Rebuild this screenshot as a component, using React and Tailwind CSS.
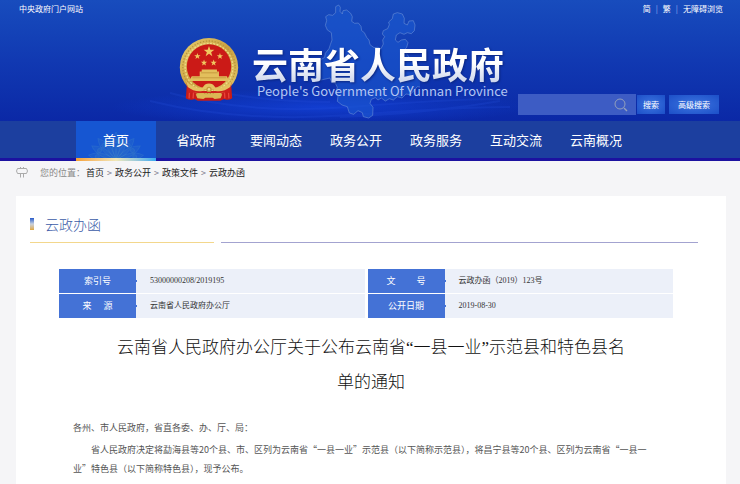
import { useState } from "react";

const navItems = ["首页", "省政府", "要闻动态", "政务公开", "政务服务", "互动交流", "云南概况"];
const crumbs = ["首页", "政务公开", "政策文件", "云政办函"];
const petals = [-80, -60, -40, -20, 0, 20, 40, 60, 80];

const rows = [
  [
    { label: ["索引号"], value: "53000000208/2019195" },
    { label: ["文", "号"], gap: "gap-[21px]", value: "云政办函（2019）123号" },
  ],
  [
    { label: ["来", "源"], gap: "gap-3", value: "云南省人民政府办公厅" },
    { label: ["公开日期"], value: "2019-08-30" },
  ],
];

function Star({ x, y, r }) {
  return (
    <path
      transform={`translate(${x} ${y}) scale(${r})`}
      fill="#f0c860"
      d="M0-1 .24-.32.95-.31.38.12.59.81 0 .4-.59.81-.38.12-.95-.31-.24-.32Z"
    />
  );
}

function Emblem() {
  return (
    <svg viewBox="0 0 180 190" className="h-[63px] w-[60px] shrink-0" aria-hidden="true">
      <defs>
        <linearGradient id="gold" x1="0" y1="0" x2="1" y2="1">
          <stop offset="0" stopColor="#e8d070" />
          <stop offset="0.5" stopColor="#caa040" />
          <stop offset="1" stopColor="#e6cc6c" />
        </linearGradient>
      </defs>
      <path d="M24 130 20 182q12 8 26 2l10 5h68l12-5q12 6 24-2l-4-52Z" fill="#c81c18" />
      <path d="M32 150l-2 32M44 156l-2 26M148 150l2 32M136 156l2 26" stroke="#e8453a" strokeWidth="4" />
      <circle cx="90" cy="88" r="88" fill="url(#gold)" />
      <circle cx="90" cy="88" r="79" fill="none" stroke="#b8963c" strokeWidth="4" strokeDasharray="4 5" />
      <circle cx="90" cy="88" r="72" fill="none" stroke="#efdc88" strokeWidth="4" strokeDasharray="6 4" />
      <circle cx="90" cy="86" r="67" fill="#cb1a17" />
      <Star x={90} y={41} r={17} />
      <Star x={55} y={55} r={10} />
      <Star x={123} y={55} r={10} />
      <Star x={75} y={75} r={10} />
      <Star x={104} y={75} r={10} />
      <path d="M68 95h46v6h6v14h24l6 15H30l8-15h24v-14h6Z" fill="#e3bf5c" />
      <path d="M66 105h50M40 120h102" stroke="#b98a30" strokeWidth="2" />
      <path d="M22 132q14 24 42 28l52 0q28-4 42-28l-4 34q-14-4-32 0H58q-18-4-32 0Z" fill="#cf211c" />
      <path d="M20 128q20 24 50 22l8-10q12-6 24 0l8 10q30 2 50-22l-6 20q-20 16-44 12l-6-6H76l-6 6q-24 4-44-12Z" fill="#e3c260" />
      <path d="M50 170l22-3 8 5h20l8-5 22 3-5 12-18 2-6-4H79l-6 4-18-2Z" fill="#dcb754" />
      <circle cx="90" cy="155" r="8" fill="#c59c3c" />
      <circle cx="90" cy="155" r="4" fill="#eed98a" />
    </svg>
  );
}

function ProvinceMap() {
  return (
    <svg viewBox="0 0 330 366" className="absolute top-0 left-[310px] h-[122px] w-[110px]" aria-hidden="true">
      <path
        d="M77 20 86 15 91 22 90 34 97 42 99 32 110 30 122 40 127 50 125 64 134 70 145 69 153 79 155 92 163 98 170 112 177 120 180 134 192 143 203 142 213 146 220 132 218 120 224 110 217 102 220 92 233 86 238 74 236 66 247 56 250 42 262 38 277 42 283 55 282 70 292 75 297 63 310 62 315 75 313 92 304 101 292 98 282 103 270 98 259 105 256 120 264 127 274 120 286 118 294 128 290 142 282 152 292 164 302 178 316 186 326 200 328 218 338 232 350 238 348 252 336 262 322 260 312 272 300 284 288 282 276 294 262 290 250 300 238 296 226 303 214 294 204 300 196 293 184 298 180 310 189 322 188 346 176 354 160 350 157 338 144 332 131 343 118 339 112 320 96 315 82 304 84 288 76 280 82 262 76 250 65 247 60 234 42 238 24 242 16 228 28 214 24 198 31 180 44 172 46 160 57 146 61 134 66 120 64 98 52 90 46 76 50 62 47 50 56 44 68 46 77 38Z"
        fill="#1a58d0"
        fillOpacity="0.6"
        stroke="#6f93d8"
        strokeOpacity="0.55"
        strokeWidth="3"
        strokeLinejoin="round"
      />
    </svg>
  );
}

function Waves() {
  return (
    <svg viewBox="0 0 420 36" className="absolute bottom-0 left-[110px] h-[36px] w-[420px]" aria-hidden="true">
      <defs>
        <radialGradient id="wave">
          <stop offset="0" stopColor="#1444e0" stopOpacity="0.7" />
          <stop offset="1" stopColor="#1040d8" stopOpacity="0" />
        </radialGradient>
      </defs>
      <ellipse cx="210" cy="22" rx="210" ry="18" fill="url(#wave)" />
      <path
        d="M60 8q80 22 180 14t150-8M40 16q90 22 200 14t160-8M90 3q60 14 130 14M230 32q90-4 160-16"
        fill="none"
        stroke="#2a5ae8"
        strokeOpacity="0.18"
        strokeWidth="2"
      />
    </svg>
  );
}

function Lotus() {
  return (
    <svg viewBox="0 0 64 32" className="absolute bottom-0 left-2 h-8 w-16" aria-hidden="true">
      {petals.map((a) => (
        <g key={a} transform={`rotate(${a} 32 31)`} fill="#4d8fc0" fillOpacity="0.13" stroke="#5aa0c8" strokeOpacity="0.18">
          <path d="M32 31q-8-16 0-28q8 12 0 28Z" />
          <circle cx="32" cy="12" r="2" />
        </g>
      ))}
    </svg>
  );
}

function Header() {
  const [query, setQuery] = useState("");

  return (
    <header className="relative h-[121px] bg-linear-to-b from-[#184cbd] via-[#1139b2] to-[#0b28a6] text-white">
      <Waves />
      <ProvinceMap />
      <div className="relative flex h-[38px] items-start justify-between pt-1 pr-[17px] pl-[19px] text-[8px] leading-[10px]">
        <a href="#portal">中央政府门户网站</a>
        <div className="flex gap-[5px]">
          <a href="#simplified">简</a>
          <span className="text-[#8fb0ee]">|</span>
          <a href="#traditional">繁</a>
          <span className="text-[#8fb0ee]">|</span>
          <a href="#accessible">无障碍浏览</a>
        </div>
      </div>
      <div className="relative flex items-start justify-between pr-[21px] pl-[179px]">
        <div className="flex gap-[13px]">
          <Emblem />
          <div className="pt-1 whitespace-nowrap">
            <h1 className="bg-linear-to-b from-white from-50% to-[#c8d2ea] bg-clip-text text-[36px] leading-[42px] font-bold text-transparent drop-shadow-[1px_1px_1px_#0a2580]">
              云南省人民政府
            </h1>
            <p className="pl-[5px] text-[13px] leading-[14px] text-[#b3c6f3]">People's Government Of Yunnan Province</p>
          </div>
        </div>
        <form className="mt-14 flex h-[21px] items-center" onSubmit={(e) => e.preventDefault()}>
          <div className="relative h-full w-[118px]">
            <input
              type="text"
              aria-label="搜索"
              value={query}
              onChange={(e) => setQuery(e.target.value)}
              className="block h-full w-full bg-[#3d5cc4] pr-5 pl-2 text-[9px] outline-none"
            />
            <svg viewBox="0 0 14 14" className="absolute top-1 right-2 size-[14px]" fill="none" stroke="#93a0bd" aria-hidden="true">
              <circle cx="6" cy="6" r="5" />
              <path d="M10 10l3 3" strokeWidth="1.4" />
            </svg>
          </div>
          <button type="submit" className="ml-px h-[19px] w-7 bg-radial from-[#3d74e0] to-[#1c4fc8] text-[8px]">
            搜索
          </button>
          <button type="button" className="ml-1 h-[19px] w-[50px] bg-radial from-[#3d74e0] to-[#1c4fc8] text-[8px]">
            高级搜索
          </button>
        </form>
      </div>
    </header>
  );
}

export default function App() {
  return (
    <div className="flex min-h-screen flex-col bg-[#f5f5f7] font-['Noto_Sans_CJK_SC',sans-serif] text-[#333]">
      <Header />

      <nav className="flex h-10 border-b-[3px] border-[#1c12a0] bg-[#1c3f9f] pl-[76px] text-[13px] text-white">
        {navItems.map((item, i) =>
          i === 0 ? (
            <a
              key={item}
              href="#home"
              aria-current="page"
              className="relative -mb-[3px] flex w-20 items-center justify-center bg-[#1656d2] pb-[3px]"
            >
              <Lotus />
              <span className="relative">{item}</span>
              <span className="absolute inset-x-0 bottom-0 h-[3px] bg-linear-to-r from-[#f5a030] via-[#f0e8b8] to-[#30a8f0]" />
            </a>
          ) : (
            <a key={item} href="#section" className="flex w-20 items-center justify-center">
              {item}
            </a>
          )
        )}
      </nav>

      <div className="flex h-[35px] items-start pt-[5px] pl-4 text-[9px] leading-[14px]">
        <svg viewBox="0 0 12 12" className="mt-px size-3" fill="none" stroke="#aaa" aria-hidden="true">
          <path d="M1.5 1.5h9l1 2.5-1 2.5h-9l-1-2.5ZM4.5 6.5v4M7.5 6.5v4M4.5 1.5V0M7.5 1.5V0" />
        </svg>
        <span className="ml-3 text-[#888]">您的位置：</span>
        <div className="ml-px flex gap-[3px] text-[#222]">
          {crumbs.map((c, i) => (
            <span key={c} className="flex gap-[3px]">
              {i > 0 && <span className="text-[#778]">&gt;</span>}
              <a href="#crumb">{c}</a>
            </span>
          ))}
        </div>
      </div>

      <main className="mr-[14px] ml-4 flex-1 bg-white pt-[18px] pr-7 pb-1 pl-[14px]">
        <h2 className="flex h-5 items-center gap-[11px] text-[14px] font-light text-[#3c5ca8]">
          <span className="h-3 w-1 bg-linear-to-b from-[#2858c8] via-[#c8d0dc] to-[#e0a838]" />
          云政办函
        </h2>
        <div className="mt-2 flex gap-[7px]">
          <span className="h-px w-[184px] bg-[#f3d78c]" />
          <span className="h-px flex-1 bg-[#a3a3d0]" />
        </div>

        <table className="mt-[26px] ml-[29px] w-[calc(100%-54px)] table-fixed border-separate border-spacing-0 text-[8px]">
          <colgroup>
            <col className="w-[77px]" />
            <col />
            <col className="w-[80px]" />
            <col />
          </colgroup>
          <tbody>
            {rows.map((row, r) => (
              <tr key={r} className="h-[25px]">
                {row.map((cell, c) => [
                  <th
                    key={`h${c}`}
                    scope="row"
                    className={`relative border-b border-white bg-[#4472d6] bg-clip-padding p-0 text-[9px] font-normal text-white ${
                      c === 1 ? "border-l-[3px]" : ""
                    }`}
                  >
                    <span className={`flex justify-center ${cell.gap || ""}`}>
                      {cell.label.map((l) => (
                        <span key={l}>{l}</span>
                      ))}
                    </span>
                    <span className="absolute top-[11px] -right-px size-[2px] bg-[#4472d6]" />
                  </th>,
                  <td
                    key={`d${c}`}
                    className="border-b border-white bg-[#ecf0f9] p-0 pl-[14px] font-['Liberation_Serif','Noto_Sans_CJK_SC',serif]"
                  >
                    {cell.value}
                  </td>,
                ])}
              </tr>
            ))}
          </tbody>
        </table>

        <article className="pr-[29px] pl-[43px]">
          <h3 className="mx-auto mt-[11px] max-w-[520px] text-center font-['Liberation_Serif','Noto_Sans_CJK_SC',serif] text-[17px] leading-[35px] font-light text-[#111]">
            云南省人民政府办公厅关于公布云南省“一县一业”示范县和特色县名单的通知
          </h3>
          <div className="mt-[18px] text-[9px] leading-[19px] text-[#555]">
            <p className="mb-[3px]">各州、市人民政府，省直各委、办、厅、局：</p>
            <p className="max-w-[584px] indent-[2em]">
              省人民政府决定将勐海县等20个县、市、区列为云南省“一县一业”示范县（以下简称示范县），将昌宁县等20个县、区列为云南省“一县一业”特色县（以下简称特色县），现予公布。
            </p>
          </div>
        </article>
      </main>
    </div>
  );
}
